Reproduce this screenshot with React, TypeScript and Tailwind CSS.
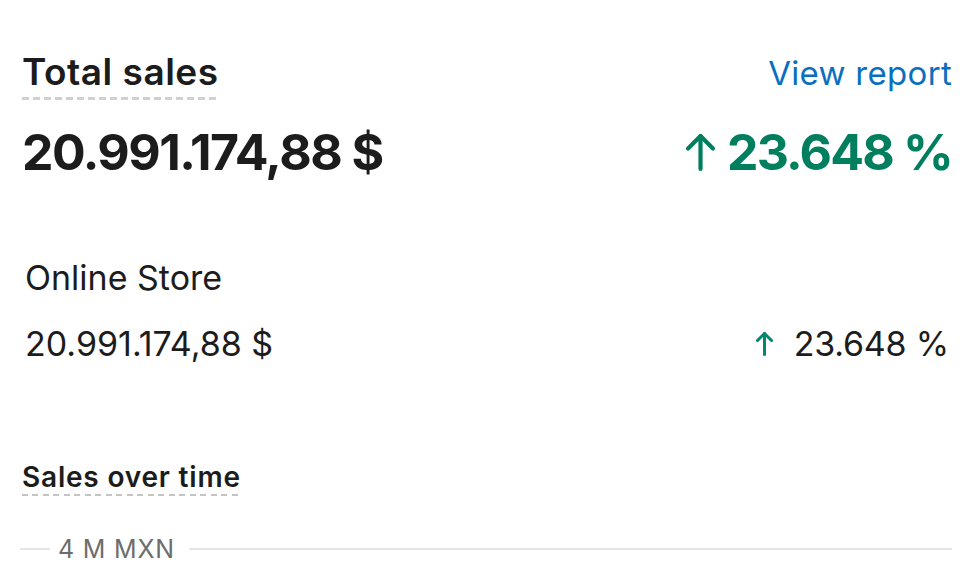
import React from 'react';

// thin up arrow used next to growth figures
const UpArrow = ({ w, h, stroke, className }: { w: number; h: number; stroke: number; className?: string }) => {
  const half = w / 2;
  const pad = stroke / 2;
  return (
    <svg width={w} height={h} viewBox={`0 0 ${w} ${h}`} fill="none" stroke="currentColor" strokeWidth={stroke} strokeLinecap="round" strokeLinejoin="round" className={className}>
      <path d={`M${half} ${h - pad}V${pad}`} />
      <path d={`M${pad} ${half}L${half} ${pad}L${w - pad} ${half}`} />
    </svg>
  );
};

const App = () => {
  return (
    <div className="w-[972px] h-[586px] bg-white overflow-hidden text-[#1c1c1c] font-['Inter','Liberation_Sans',sans-serif]">
      <div className="pl-[22px] pr-[20px] pt-[50px]">
        {/* header */}
        <div className="flex items-baseline justify-between">
          <span className="text-[37px] font-semibold leading-[44px] tracking-[0.5px] pb-[6px] bg-[repeating-linear-gradient(to_right,#d0d0d0_0_7px,transparent_7px_11px)] bg-no-repeat bg-bottom bg-[length:100%_3px]">
            Total sales
          </span>
          <span className="text-[33px] leading-[44px] tracking-[0.3px] text-[#0a6fbf]">View report</span>
        </div>

        <div className="flex items-center justify-between mt-[24px]">
          <span className="text-[50px] font-bold leading-[56px] tracking-[-1.5px]">20.991.174,88 $</span>
          <span className="flex items-center gap-[12px] text-[50px] font-bold leading-[56px] tracking-[-1.8px] text-[#007f5f]">
            <UpArrow w={29} h={37} stroke={4.2} />
            23.648 %
          </span>
        </div>

        {/* channel breakdown */}
        <div className="pl-[3px] pr-[3px] mt-[78px]">
          <div className="text-[34px] leading-[40px]">Online Store</div>
          <div className="flex items-center justify-between mt-[26px]">
            <span className="text-[34px] leading-[40px]">20.991.174,88 $</span>
            <span className="flex items-center gap-[21px] text-[34px] leading-[40px] tracking-[-0.2px]">
              <UpArrow w={17} h={24} stroke={3} className="text-[#00876d]" />
              23.648 %
            </span>
          </div>
        </div>

        {/* chart */}
        <div className="mt-[96px]">
          <span className="inline-block text-[28px] font-semibold leading-[34px] tracking-[0.8px] pb-[2px] bg-[repeating-linear-gradient(to_right,#c4c4c4_0_6px,transparent_6px_10.5px)] bg-no-repeat bg-bottom bg-[length:100%_2px]">
            Sales over time
          </span>
          <div className="flex items-center mt-[37px] -ml-[2px]">
            <div className="w-[30px] h-[2px] bg-[#e6e6e6]" />
            <span className="ml-[8px] text-[25px] leading-[32px] text-[#6d6d6d] tracking-[0.8px]">4 M MXN</span>
            <div className="flex-1 h-[2px] bg-[#e6e6e6] ml-[14px]" />
          </div>
        </div>
      </div>
    </div>
  );
};

export default App;
